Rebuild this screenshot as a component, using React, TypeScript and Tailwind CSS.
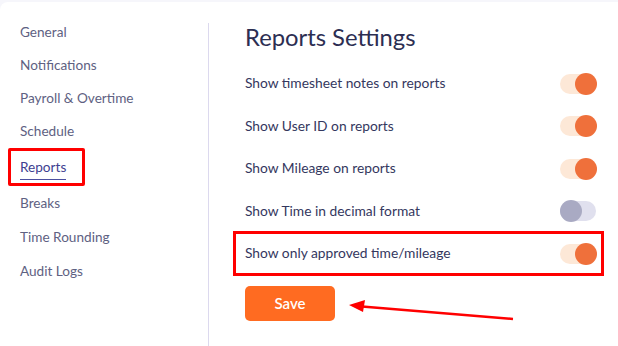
import React from "react";

const navItems = ["General", "Notifications", "Payroll & Overtime", "Schedule"];
const navItems2 = ["Breaks", "Time Rounding", "Audit Logs"];

function Toggle({ on }: { on: boolean }) {
  return (
    <div className="relative w-[37px] h-[22px]">
      <div className={"absolute left-0 right-[1px] top-[1px] bottom-[1px] rounded-full " + (on ? "bg-[#fde8d7]" : "bg-[#e0e0ee]")} />
      <div className={"absolute top-0 w-[22px] h-[22px] rounded-full " + (on ? "right-0 bg-[#ef703b]" : "left-0 bg-[#a9aac3]")} />
    </div>
  );
}

const rows: { label: string; on: boolean }[] = [
  { label: "Show timesheet notes on reports", on: true },
  { label: "Show User ID on reports", on: true },
  { label: "Show Mileage on reports", on: true },
  { label: "Show Time in decimal format", on: false },
];

export default function App() {
  return (
    <div className="relative w-[618px] h-[346px] bg-[#f6f6fb] pt-[2px] overflow-hidden" style={{ fontFamily: "Lato, 'Open Sans', sans-serif" }}>
      <div className="flex h-full bg-white rounded-tl-[8px]">
        <div className="w-[208px] pt-[14px] flex flex-col text-[13.6px] text-[#5e6182]">
          {navItems.map((n) => (
            <div key={n} className="h-[33px] flex items-center pl-[20px]">{n}</div>
          ))}
          <div className="relative h-[38px] flex items-center pl-[20px]">
            <div className="relative text-[#3d4090]">
              Reports
              <div className="absolute left-0 right-0 -bottom-[3px] h-[1.5px] bg-[#4b4fa0]" />
            </div>
            <div className="absolute left-[8px] w-[77px] top-0 bottom-0 border-[3px] border-[#ff0000] rounded-[2px]" />
          </div>
          {navItems2.map((n) => (
            <div key={n} className="h-[34px] flex items-center pl-[20px]">{n}</div>
          ))}
        </div>
        <div className="w-px bg-[#dcd9ee] mt-[21px]" />
        <div className="pl-[36px] pt-[22px] flex flex-col">
          <div className="h-[28px] flex items-center text-[23.8px] text-[#2c2e52]">Reports Settings</div>
          <div className="mt-[10.5px] w-[352px] flex flex-col text-[13.8px] text-[#34375e]">
            {rows.map((r) => (
              <div key={r.label} className="h-[42.5px] flex items-center justify-between">
                <span>{r.label}</span>
                <Toggle on={r.on} />
              </div>
            ))}
            <div className="relative h-[42.5px] flex items-center justify-between">
              <span>Show only approved time/mileage</span>
              <Toggle on={true} />
              <div className="absolute -left-[12px] -right-[7px] -top-[1.5px] -bottom-[1px] border-[3px] border-[#ff0000]" />
            </div>
          </div>
          <button className="mt-[11px] w-[90px] h-[35px] rounded-[5px] bg-[#ff6b21] text-white text-[15px] font-semibold">Save</button>
        </div>
      </div>
      <svg className="absolute left-0 top-0" width="618" height="346" viewBox="0 0 618 346">
        <line x1="513" y1="319" x2="362" y2="306.5" stroke="#f00" strokeWidth="2.5" />
        <polygon points="349,305 365,300 363,312" fill="#f00" />
      </svg>
    </div>
  );
}
